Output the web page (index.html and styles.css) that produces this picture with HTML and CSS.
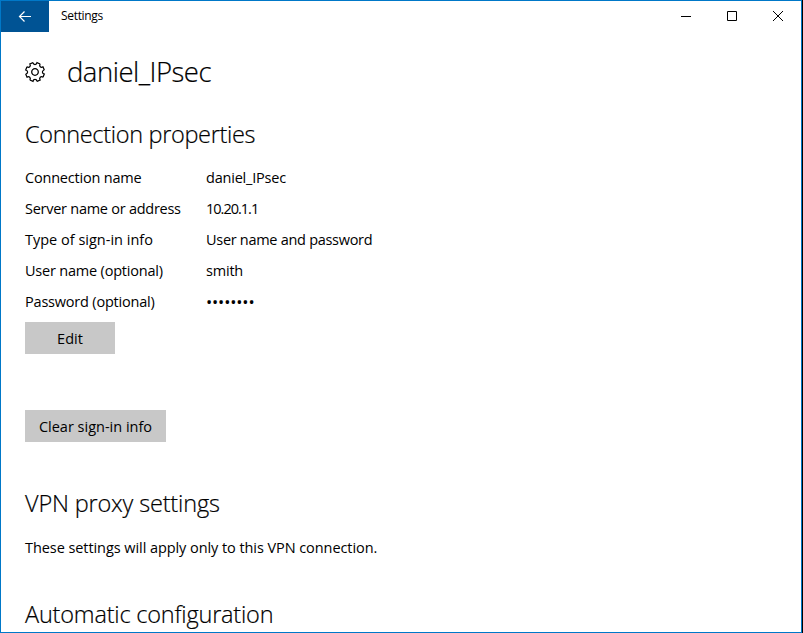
FILE: index.html
```html
<!DOCTYPE html>
<html lang="en">
<head>
<meta charset="utf-8">
<title>Settings</title>
<link rel="stylesheet" href="styles.css">
</head>
<body>
<div class="window">
  <header class="titlebar">
    <button class="back" aria-label="Back">
      <svg width="14" height="12" viewBox="0 0 14 12"><path d="M13 5.5H1.5M6.5 .5 1.5 5.5l5 5"/></svg>
    </button>
    <span class="caption">Settings</span>
    <div class="controls">
      <button aria-label="Minimize"><svg width="10" height="10" viewBox="0 0 10 10"><path d="M0 5.5h10"/></svg></button>
      <button aria-label="Maximize"><svg width="10" height="10" viewBox="0 0 10 10"><path d="M.5 .5h9v9h-9z"/></svg></button>
      <button aria-label="Close"><svg width="10" height="10" viewBox="0 0 10 10"><path d="M0 0l10 10M10 0L0 10"/></svg></button>
    </div>
  </header>
  <main class="content">
    <div class="heading">
      <svg class="gear" width="22" height="22" viewBox="-11 -11 22 22">
        <defs><path id="tooth" d="M-2-9.3Q-1.6-7.4 0-7.4Q1.6-7.4 2-9.3L5.16-7.99"/></defs>
        <use href="#tooth"/><use href="#tooth" transform="rotate(45)"/><use href="#tooth" transform="rotate(90)"/><use href="#tooth" transform="rotate(135)"/>
        <use href="#tooth" transform="rotate(180)"/><use href="#tooth" transform="rotate(225)"/><use href="#tooth" transform="rotate(270)"/><use href="#tooth" transform="rotate(315)"/>
        <circle r="3.3"/>
      </svg>
      <h1>daniel_IPsec</h1>
    </div>
    <h2 class="h-conn">Connection properties</h2>
    <dl class="properties">
      <dt>Connection name</dt><dd>daniel_IPsec</dd>
      <dt class="server">Server name or address</dt><dd class="address">10.20.1.1</dd>
      <dt class="type">Type of sign-in info</dt><dd class="method">User name and password</dd>
      <dt>User name (optional)</dt><dd>smith</dd>
      <dt>Password (optional)</dt><dd class="dots">••••••••</dd>
    </dl>
    <button class="btn edit">Edit</button>
    <button class="btn clear">Clear sign-in info</button>
    <h2 class="h-proxy">VPN proxy settings</h2>
    <p class="note">These settings will apply only to this VPN connection.</p>
    <h2 class="h-auto">Automatic configuration</h2>
  </main>
</div>
</body>
</html>
```
FILE: styles.css
```css
* { box-sizing: border-box; margin: 0; padding: 0; }
html, body { height: 100%; overflow: hidden; }
body {
  background: #000;
  padding-right: 1px;
  font: 14.5px/20px "Open Sans", "Noto Sans", sans-serif;
  color: #000;
}
button { font: inherit; color: inherit; border: 0; background: none; }
svg { fill: none; stroke: #000; stroke-width: 1; display: block; }

.window { height: 633px; border: 1px solid #0078c8; background: #fff; overflow: hidden; }
.titlebar { display: flex; height: 31px; }
.back { width: 48px; background: #005394; display: flex; align-items: center; justify-content: center; }
.back svg { stroke: #fff; stroke-width: 1.2; }
.caption { margin-left: 12px; font-size: 12px; line-height: 30px; letter-spacing: -0.32px; }
.controls { margin-left: auto; display: flex; }
.controls button { width: 46px; padding-bottom: 1px; display: flex; align-items: center; justify-content: center; }

.content { padding: 0 24px; }
.heading { display: flex; align-items: center; height: 80px; gap: 21px; margin-left: -1px; }
.gear { stroke-width: 1.25; }
h1, h2 { font-weight: 300; white-space: nowrap; -webkit-text-stroke: 0.2px #000; }
h1 { font-size: 27.5px; line-height: 40px; letter-spacing: -0.5px; }
h2 { font-size: 23.5px; line-height: 32px; letter-spacing: -0.2px; }
.h-conn { margin-top: 6px; letter-spacing: -0.33px; }
.properties { display: grid; grid-template-columns: 181px 1fr; grid-auto-rows: 31px; line-height: 31px; margin-top: 12px; white-space: nowrap; letter-spacing: -0.2px; }
.server { letter-spacing: -0.26px; }
.type { letter-spacing: 0; }
.method { letter-spacing: -0.29px; }
.address { letter-spacing: -1px; }
.dots { font-size: 16.5px; letter-spacing: -0.15px; }
.btn { display: block; height: 32px; background: #c8c8c8; padding-top: 1px; }
.edit { width: 90px; margin-top: 5px; }
.clear { width: 141px; margin-top: 56px; }
.h-proxy { margin-top: 45px; letter-spacing: -0.17px; }
.note { margin-top: 19px; letter-spacing: -0.07px; }
.h-auto { margin-top: 40px; }
```
